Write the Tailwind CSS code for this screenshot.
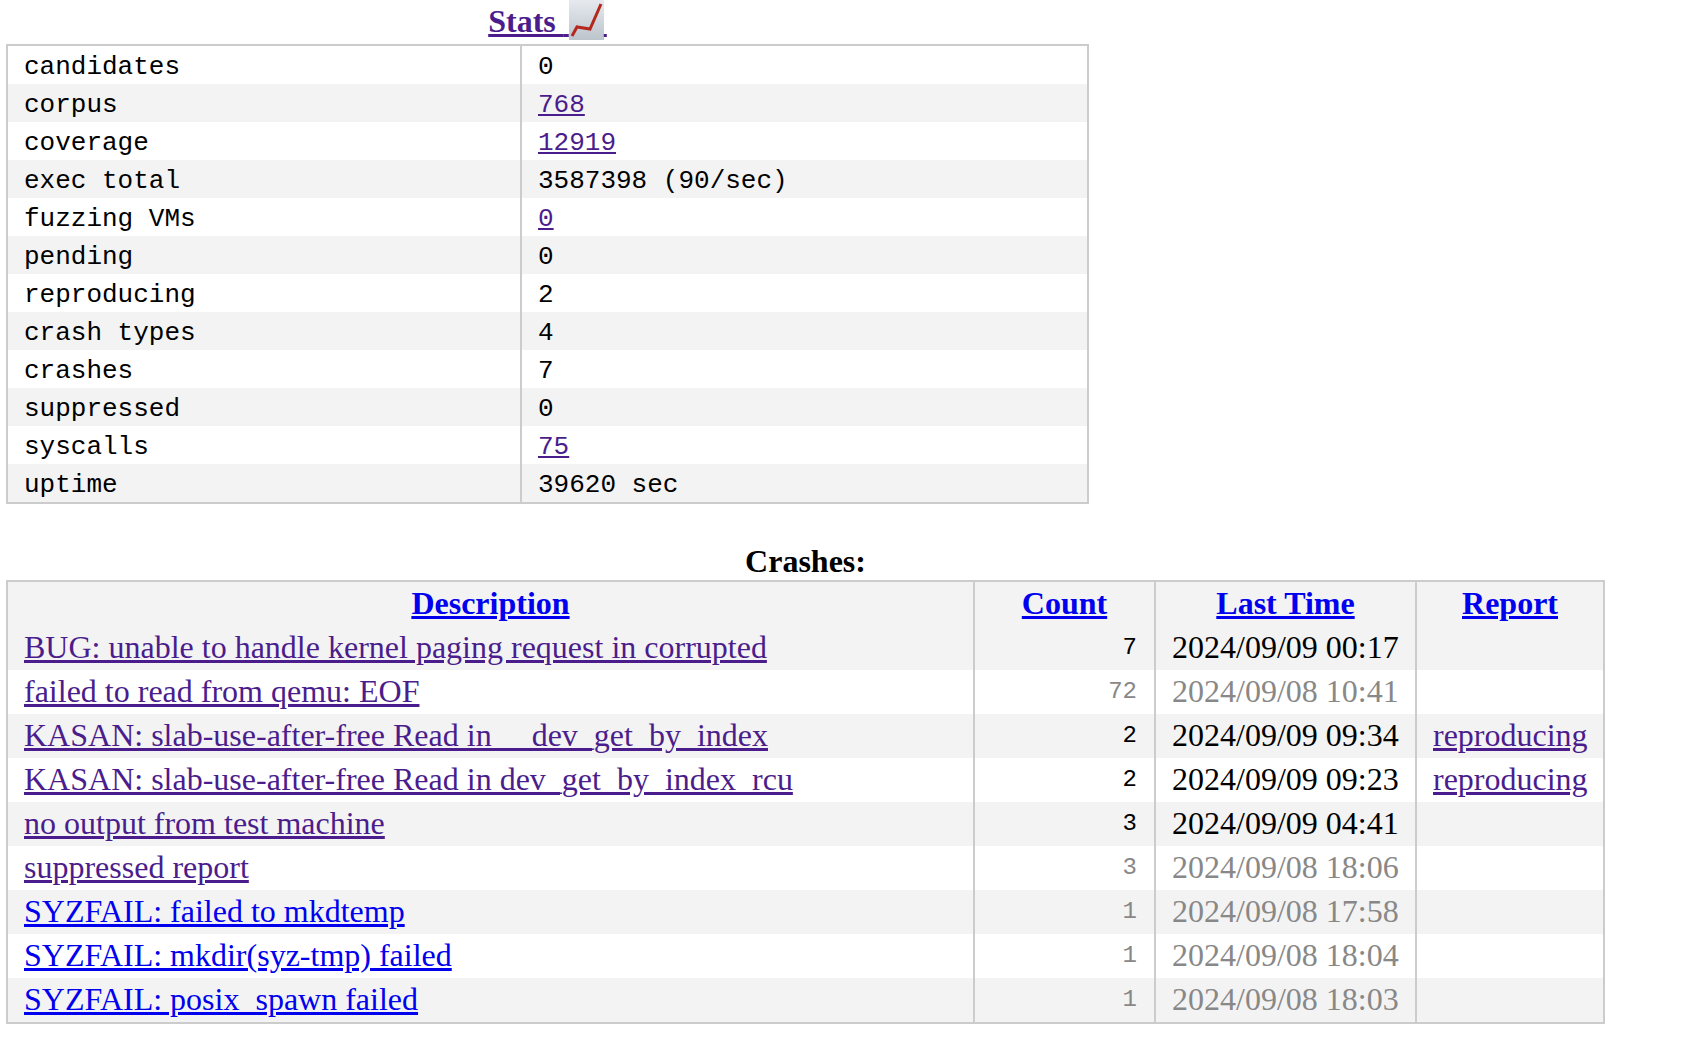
<!DOCTYPE html>
<html lang="en">
<head>
<meta charset="UTF-8">
<title>syzkaller</title>
<script src="https://cdn.jsdelivr.net/npm/@tailwindcss/browser@4"></script>
</head>
<body class="bg-white text-black font-['Liberation_Serif',serif] text-[32px] leading-[38px]">
<div class="pl-[6px]">
    <!-- Stats -->
    <table class="table-fixed border-collapse border-2 border-[#ccc] w-[1083px] font-['Liberation_Mono',monospace] text-[26px] leading-[34px]">
        <caption class="h-[44px] font-['Liberation_Serif',serif] text-[32px] font-bold leading-[40px] whitespace-nowrap">
            <a href="#" class="text-[#4b1d8c] underline">Stats&nbsp;<span class="text-[20px]">&nbsp;</span><svg class="inline-block align-[-8px] w-[35px] h-[40px]" viewBox="0 0 35 40"><defs><linearGradient id="g" x1="0" y1="0" x2="0" y2="1"><stop offset="0" stop-color="#e6eaef"/><stop offset="1" stop-color="#bcc4cc"/></linearGradient></defs><rect width="35" height="40" fill="url(#g)"/><path d="M3 36 L8 27 L21 29 L32 4" fill="none" stroke="#b5281e" stroke-width="3"/></svg><span class="text-[12px]">&nbsp;</span></a>
        </caption>
        <tbody>
            <tr class="h-[38px]"><td class="w-[514px] px-4 pt-[4px] pb-0 border-r-2 border-[#ccc]">candidates</td><td class="px-4 pt-[4px] pb-0">0</td></tr>
            <tr class="h-[38px] bg-[#f3f3f3]"><td class="px-4 pt-[4px] pb-0 border-r-2 border-[#ccc]">corpus</td><td class="px-4 pt-[4px] pb-0"><a href="#" class="text-[#4b1d8c] underline">768</a></td></tr>
            <tr class="h-[38px]"><td class="px-4 pt-[4px] pb-0 border-r-2 border-[#ccc]">coverage</td><td class="px-4 pt-[4px] pb-0"><a href="#" class="text-[#4b1d8c] underline">12919</a></td></tr>
            <tr class="h-[38px] bg-[#f3f3f3]"><td class="px-4 pt-[4px] pb-0 border-r-2 border-[#ccc]">exec total</td><td class="px-4 pt-[4px] pb-0">3587398 (90/sec)</td></tr>
            <tr class="h-[38px]"><td class="px-4 pt-[4px] pb-0 border-r-2 border-[#ccc]">fuzzing VMs</td><td class="px-4 pt-[4px] pb-0"><a href="#" class="text-[#4b1d8c] underline">0</a></td></tr>
            <tr class="h-[38px] bg-[#f3f3f3]"><td class="px-4 pt-[4px] pb-0 border-r-2 border-[#ccc]">pending</td><td class="px-4 pt-[4px] pb-0">0</td></tr>
            <tr class="h-[38px]"><td class="px-4 pt-[4px] pb-0 border-r-2 border-[#ccc]">reproducing</td><td class="px-4 pt-[4px] pb-0">2</td></tr>
            <tr class="h-[38px] bg-[#f3f3f3]"><td class="px-4 pt-[4px] pb-0 border-r-2 border-[#ccc]">crash types</td><td class="px-4 pt-[4px] pb-0">4</td></tr>
            <tr class="h-[38px]"><td class="px-4 pt-[4px] pb-0 border-r-2 border-[#ccc]">crashes</td><td class="px-4 pt-[4px] pb-0">7</td></tr>
            <tr class="h-[38px] bg-[#f3f3f3]"><td class="px-4 pt-[4px] pb-0 border-r-2 border-[#ccc]">suppressed</td><td class="px-4 pt-[4px] pb-0">0</td></tr>
            <tr class="h-[38px]"><td class="px-4 pt-[4px] pb-0 border-r-2 border-[#ccc]">syscalls</td><td class="px-4 pt-[4px] pb-0"><a href="#" class="text-[#4b1d8c] underline">75</a></td></tr>
            <tr class="h-[38px] bg-[#f3f3f3]"><td class="px-4 pt-[4px] pb-0 border-r-2 border-[#ccc]">uptime</td><td class="px-4 pt-[4px] pb-0">39620 sec</td></tr>
        </tbody>
    </table>

    <!-- Crashes -->
    <table class="table-fixed border-collapse border-2 border-[#ccc] w-[1599px] mt-[32px]">
        <caption class="h-[44px] font-bold leading-[50px]">Crashes:</caption>
        <thead>
            <tr class="h-[45px] bg-[#f3f3f3] font-bold">
                <th class="w-[967px] pt-0 pb-[3px] px-0 border-r-2 border-[#ccc]"><a href="#" class="text-[#0000ee] underline">Description</a></th>
                <th class="w-[181px] pt-0 pb-[3px] px-0 border-r-2 border-[#ccc]"><a href="#" class="text-[#0000ee] underline">Count</a></th>
                <th class="w-[261px] pt-0 pb-[3px] px-0 border-r-2 border-[#ccc]"><a href="#" class="text-[#0000ee] underline">Last Time</a></th>
                <th class="pt-0 pb-[3px] px-0"><a href="#" class="text-[#0000ee] underline">Report</a></th>
            </tr>
        </thead>
        <tbody>
            <tr class="h-[44px] bg-[#f3f3f3]">
                <td class="px-4 pt-0 pb-[2px] border-r-2 border-[#ccc]"><a href="#" class="text-[#4b1d8c] underline">BUG: unable to handle kernel paging request in corrupted</a></td>
                <td class="pl-4 pr-[17px] py-0 border-r-2 border-[#ccc] text-right font-['Liberation_Mono',monospace] text-[24px]">7</td>
                <td class="px-4 pt-0 pb-[2px] border-r-2 border-[#ccc]">2024/09/09 00:17</td>
                <td class="px-4 pt-0 pb-[2px]"></td>
            </tr>
            <tr class="h-[44px] text-[#888]">
                <td class="px-4 pt-0 pb-[2px] border-r-2 border-[#ccc]"><a href="#" class="text-[#4b1d8c] underline">failed to read from qemu: EOF</a></td>
                <td class="pl-4 pr-[17px] py-0 border-r-2 border-[#ccc] text-right font-['Liberation_Mono',monospace] text-[24px]">72</td>
                <td class="px-4 pt-0 pb-[2px] border-r-2 border-[#ccc]">2024/09/08 10:41</td>
                <td class="px-4 pt-0 pb-[2px]"></td>
            </tr>
            <tr class="h-[44px] bg-[#f3f3f3]">
                <td class="px-4 pt-0 pb-[2px] border-r-2 border-[#ccc]"><a href="#" class="text-[#4b1d8c] underline">KASAN: slab-use-after-free Read in __dev_get_by_index</a></td>
                <td class="pl-4 pr-[17px] py-0 border-r-2 border-[#ccc] text-right font-['Liberation_Mono',monospace] text-[24px]">2</td>
                <td class="px-4 pt-0 pb-[2px] border-r-2 border-[#ccc]">2024/09/09 09:34</td>
                <td class="px-4 pt-0 pb-[2px]"><a href="#" class="text-[#4b1d8c] underline">reproducing</a></td>
            </tr>
            <tr class="h-[44px]">
                <td class="px-4 pt-0 pb-[2px] border-r-2 border-[#ccc]"><a href="#" class="text-[#4b1d8c] underline">KASAN: slab-use-after-free Read in dev_get_by_index_rcu</a></td>
                <td class="pl-4 pr-[17px] py-0 border-r-2 border-[#ccc] text-right font-['Liberation_Mono',monospace] text-[24px]">2</td>
                <td class="px-4 pt-0 pb-[2px] border-r-2 border-[#ccc]">2024/09/09 09:23</td>
                <td class="px-4 pt-0 pb-[2px]"><a href="#" class="text-[#4b1d8c] underline">reproducing</a></td>
            </tr>
            <tr class="h-[44px] bg-[#f3f3f3]">
                <td class="px-4 pt-0 pb-[2px] border-r-2 border-[#ccc]"><a href="#" class="text-[#4b1d8c] underline">no output from test machine</a></td>
                <td class="pl-4 pr-[17px] py-0 border-r-2 border-[#ccc] text-right font-['Liberation_Mono',monospace] text-[24px]">3</td>
                <td class="px-4 pt-0 pb-[2px] border-r-2 border-[#ccc]">2024/09/09 04:41</td>
                <td class="px-4 pt-0 pb-[2px]"></td>
            </tr>
            <tr class="h-[44px] text-[#888]">
                <td class="px-4 pt-0 pb-[2px] border-r-2 border-[#ccc]"><a href="#" class="text-[#4b1d8c] underline">suppressed report</a></td>
                <td class="pl-4 pr-[17px] py-0 border-r-2 border-[#ccc] text-right font-['Liberation_Mono',monospace] text-[24px]">3</td>
                <td class="px-4 pt-0 pb-[2px] border-r-2 border-[#ccc]">2024/09/08 18:06</td>
                <td class="px-4 pt-0 pb-[2px]"></td>
            </tr>
            <tr class="h-[44px] bg-[#f3f3f3] text-[#888]">
                <td class="px-4 pt-0 pb-[2px] border-r-2 border-[#ccc]"><a href="#" class="text-[#0000ee] underline">SYZFAIL: failed to mkdtemp</a></td>
                <td class="pl-4 pr-[17px] py-0 border-r-2 border-[#ccc] text-right font-['Liberation_Mono',monospace] text-[24px]">1</td>
                <td class="px-4 pt-0 pb-[2px] border-r-2 border-[#ccc]">2024/09/08 17:58</td>
                <td class="px-4 pt-0 pb-[2px]"></td>
            </tr>
            <tr class="h-[44px] text-[#888]">
                <td class="px-4 pt-0 pb-[2px] border-r-2 border-[#ccc]"><a href="#" class="text-[#0000ee] underline">SYZFAIL: mkdir(syz-tmp) failed</a></td>
                <td class="pl-4 pr-[17px] py-0 border-r-2 border-[#ccc] text-right font-['Liberation_Mono',monospace] text-[24px]">1</td>
                <td class="px-4 pt-0 pb-[2px] border-r-2 border-[#ccc]">2024/09/08 18:04</td>
                <td class="px-4 pt-0 pb-[2px]"></td>
            </tr>
            <tr class="h-[45px] bg-[#f3f3f3] text-[#888]">
                <td class="px-4 pt-0 pb-[3px] border-r-2 border-[#ccc]"><a href="#" class="text-[#0000ee] underline">SYZFAIL: posix_spawn failed</a></td>
                <td class="pl-4 pr-[17px] pt-0 pb-[1px] border-r-2 border-[#ccc] text-right font-['Liberation_Mono',monospace] text-[24px]">1</td>
                <td class="px-4 pt-0 pb-[3px] border-r-2 border-[#ccc]">2024/09/08 18:03</td>
                <td class="px-4 pt-0 pb-[3px]"></td>
            </tr>
        </tbody>
    </table>
</div>
</body>
</html>
